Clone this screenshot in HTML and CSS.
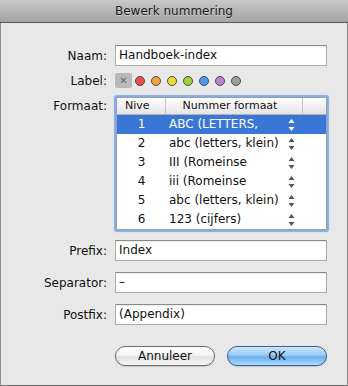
FILE: index.html
```html
<!DOCTYPE html>
<html>
<head>
<meta charset="utf-8">
<link rel="stylesheet" href="styles.css">
</head>
<body>
<div class="window">
  <div class="titlebar">Bewerk nummering</div>
  <div class="content">
    <div class="row r-naam">
      <span class="lbl">Naam:</span>
      <div class="field">Handboek-index</div>
    </div>
    <div class="row r-label">
      <span class="lbl">Label:</span>
      <div class="labels">
        <span class="nolabel">&#x2715;</span>
        <span class="dot red"></span>
        <span class="dot orange"></span>
        <span class="dot yellow"></span>
        <span class="dot green"></span>
        <span class="dot blue"></span>
        <span class="dot purple"></span>
        <span class="dot gray"></span>
      </div>
    </div>
    <div class="row r-table">
      <span class="lbl lbl-top">Formaat:</span>
      <div class="table">
        <div class="thead">
          <div class="c1">Nive</div>
          <div class="c2">Nummer formaat</div>
          <div class="c3"></div>
        </div>
        <div class="tr sel">
          <div class="c1">1</div>
          <div class="c2"><span class="txt">ABC (LETTERS,</span><svg class="step" width="7" height="12" viewBox="0 0 7 12"><path d="M3.5 0 L6.5 4 L0.5 4 Z M0.5 8 L6.5 8 L3.5 12 Z"/></svg></div>
          <div class="c3"></div>
        </div>
        <div class="tr">
          <div class="c1">2</div>
          <div class="c2"><span class="txt">abc (letters, klein)</span><svg class="step" width="7" height="12" viewBox="0 0 7 12"><path d="M3.5 0 L6.5 4 L0.5 4 Z M0.5 8 L6.5 8 L3.5 12 Z"/></svg></div>
          <div class="c3"></div>
        </div>
        <div class="tr">
          <div class="c1">3</div>
          <div class="c2"><span class="txt">III (Romeinse</span><svg class="step" width="7" height="12" viewBox="0 0 7 12"><path d="M3.5 0 L6.5 4 L0.5 4 Z M0.5 8 L6.5 8 L3.5 12 Z"/></svg></div>
          <div class="c3"></div>
        </div>
        <div class="tr">
          <div class="c1">4</div>
          <div class="c2"><span class="txt">iii (Romeinse</span><svg class="step" width="7" height="12" viewBox="0 0 7 12"><path d="M3.5 0 L6.5 4 L0.5 4 Z M0.5 8 L6.5 8 L3.5 12 Z"/></svg></div>
          <div class="c3"></div>
        </div>
        <div class="tr">
          <div class="c1">5</div>
          <div class="c2"><span class="txt">abc (letters, klein)</span><svg class="step" width="7" height="12" viewBox="0 0 7 12"><path d="M3.5 0 L6.5 4 L0.5 4 Z M0.5 8 L6.5 8 L3.5 12 Z"/></svg></div>
          <div class="c3"></div>
        </div>
        <div class="tr">
          <div class="c1">6</div>
          <div class="c2"><span class="txt">123 (cijfers)</span><svg class="step" width="7" height="12" viewBox="0 0 7 12"><path d="M3.5 0 L6.5 4 L0.5 4 Z M0.5 8 L6.5 8 L3.5 12 Z"/></svg></div>
          <div class="c3"></div>
        </div>
      </div>
    </div>
    <div class="row r-prefix">
      <span class="lbl">Prefix:</span>
      <div class="field">Index</div>
    </div>
    <div class="row r-sep">
      <span class="lbl">Separator:</span>
      <div class="field">–</div>
    </div>
    <div class="row r-sep">
      <span class="lbl">Postfix:</span>
      <div class="field">(Appendix)</div>
    </div>
    <div class="row r-buttons">
      <span></span>
      <div class="buttons">
        <div class="btn">Annuleer</div>
        <div class="btn default">OK</div>
      </div>
    </div>
  </div>
</div>
</body>
</html>
```

FILE: styles.css
```css
* { box-sizing: border-box; }
html, body { margin: 0; padding: 0; }
body {
  width: 348px;
  height: 386px;
  background: #e8e8e8;
  font-family: "DejaVu Sans", sans-serif;
  font-size: 12px;
  color: #111;
  overflow: hidden;
}
.window {
  width: 348px;
  height: 386px;
  border-left: 1px solid #8c8c8c;
  border-right: 1px solid #8c8c8c;
  border-bottom: 1px solid #6e6e6e;
  background: #e8e8e8;
}
.titlebar {
  height: 23px;
  margin: 0 -1px;
  background: linear-gradient(#c9c9c9, #b6b6b6 50%, #a4a4a4);
  border-bottom: 1px solid #5a5a5a;
  text-align: center;
  line-height: 22px;
  font-size: 12px;
  color: #1a1a1a;
  text-shadow: 0 1px 0 rgba(255,255,255,0.35);
}
.content { padding-top: 22px; }
.row {
  display: grid;
  grid-template-columns: 106px 212px;
  column-gap: 8px;
  align-items: center;
}
.lbl { text-align: right; }
.lbl-top { align-self: start; line-height: 17px; margin-top: 1px; }
.field {
  height: 21px;
  background: #fff;
  border: 1px solid #ababab;
  border-top-color: #8a8a8a;
  box-shadow: inset 0 1px 1px rgba(0,0,0,0.08);
  padding-left: 3px;
  line-height: 19px;
  color: #111;
}
.r-label { margin-top: 7px; height: 15px; }
.labels { display: flex; align-items: center; height: 15px; }
.nolabel {
  width: 17px;
  height: 15px;
  border-radius: 2px;
  background: #b9b9b9;
  color: #6a6a6a;
  font-size: 10px;
  font-weight: bold;
  line-height: 15px;
  text-align: center;
  margin-right: 3px;
}
.dot {
  width: 10px;
  height: 10px;
  border-radius: 50%;
  border: 1px solid #4a4a4a;
  margin-right: 6px;
}
.red { background: #ef4d4a; }
.orange { background: #f4a23a; }
.yellow { background: #e9dd3b; }
.green { background: #a4d23c; }
.blue { background: #4e9af0; }
.purple { background: #b784d5; }
.gray { background: #9e9e9e; }

.r-table { margin-top: 9px; }
.table {
  width: 211px;
  margin-left: 1px;
  background: #fff;
  border: 1px solid #8f9fb8;
  box-shadow: 0 0 1px 2px #86ace2;
  border-radius: 1px;
}
.thead {
  display: grid;
  grid-template-columns: 49px 137px 1fr;
  height: 17px;
  background: linear-gradient(#ffffff, #f1f1f1 50%, #e4e4e4);
  border-bottom: 1px solid #b4b4b4;
  font-size: 11px;
  line-height: 16px;
}
.thead > div { border-right: 1px solid #c4c4c4; }
.thead > .c3 { border-right: none; }
.thead .c1 { text-align: left; padding-left: 8px; }
.thead .c2 { text-align: center; padding-right: 8px; }
.tr {
  display: grid;
  grid-template-columns: 49px 137px 1fr;
  height: 19px;
  line-height: 19px;
}
.tr .c1 { text-align: center; padding-left: 0; }
.tr .c2 {
  display: flex;
  align-items: center;
  padding-left: 3px;
}
.tr .txt { flex: 1; white-space: nowrap; overflow: hidden; }
.step { fill: #555; margin-right: 8px; flex: none; }
.tr.sel { background: #3a76d6; color: #fff; }
.tr.sel .step { fill: #fff; }

.r-prefix { margin-top: 10px; }
.r-sep { margin-top: 11px; }
.r-buttons { margin-top: 21px; }
.buttons { display: flex; gap: 12px; }
.btn {
  width: 100px;
  height: 20px;
  border-radius: 10px;
  border: 1px solid #6b6b6b;
  background: linear-gradient(#ffffff, #f4f4f4 45%, #e2e2e2 55%, #f6f6f6);
  text-align: center;
  line-height: 18px;
  font-size: 12px;
  color: #111;
  box-shadow: 0 1px 1px rgba(0,0,0,0.15);
}
.btn.default {
  border-color: #35609c;
  background: linear-gradient(#cfe6fb, #9ccbf5 45%, #6aaeed 55%, #a9dcfb);
}
```
